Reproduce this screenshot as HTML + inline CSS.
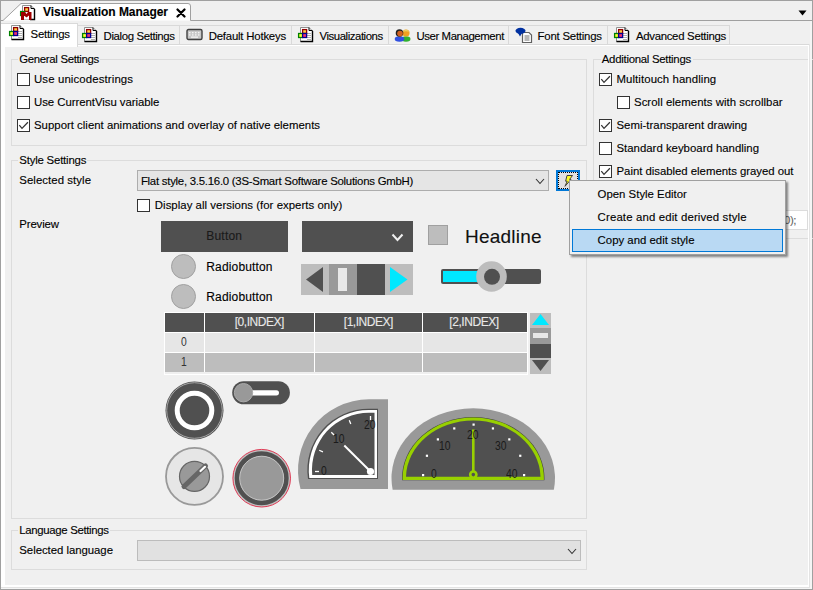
<!DOCTYPE html>
<html><head><meta charset="utf-8"><style>
html,body{margin:0;padding:0;width:813px;height:590px;overflow:hidden;background:#f0f0f0;font-family:"Liberation Sans",sans-serif;-webkit-text-stroke:0.12px currentColor;}
div,svg{box-sizing:content-box}
</style></head><body>
<div style="position:absolute;left:0px;top:0px;width:813px;height:590px;background:#f0f0f0"></div>
<svg style="position:absolute;left:0;top:0" width="813" height="26"><path d="M1 20.5 H3 L21 3.5 H188 Q190.5 3.5 190.5 6 V20.5 H812" fill="#fff" stroke="#a0a0a0" stroke-width="1"/><rect x="1" y="21" width="811" height="3" fill="#f0f0f0"/></svg>
<svg style="position:absolute;left:176px;top:8px" width="10" height="10"><path d="M1.5 1.5 L8.5 8.5 M8.5 1.5 L1.5 8.5" stroke="#000" stroke-width="2.2" stroke-linecap="round"/></svg>
<svg style="position:absolute;left:798px;top:10px" width="10" height="7"><path d="M0.5 0.5 H8.5 L4.5 5.5 Z" fill="#000"/></svg>
<svg style="position:absolute;left:19px;top:4px" width="17" height="17" viewBox="0 0 17 17">
<path d="M3.5 1.5 H12 L15.5 5 V15.5 H3.5 Z" fill="#fff" stroke="#909090"/>
<path d="M15.5 5 V15.5 H11" fill="none" stroke="#000" stroke-width="1.4"/>
<path d="M12 1.5 V4.5 H15.5" fill="none" stroke="#000" stroke-width="1"/>
<rect x="5.6" y="3.6" width="4" height="3.8" fill="#ffd040" stroke="#900000" stroke-width="1.3"/>
<rect x="1.6" y="7.5" width="4" height="4" fill="#30a030" stroke="#008000" stroke-width="1.3"/>
<path d="M2 16 V8 H6 L7.5 10 L9 8 H12.5 V16 H10 V11.5 L7.5 13.5 L5 11.5 V16 Z" fill="#a00000"/>
<path d="M5 12 L7.5 14 L10 12 V15.5 H5 Z" fill="#fff"/>
</svg>
<div style="position:absolute;left:0px;top:0px;width:813px;height:1px;background:#a0a0a0"></div>
<div style="position:absolute;left:0px;top:0px;width:1px;height:590px;background:#a0a0a0"></div>
<div style="position:absolute;left:812px;top:0px;width:1px;height:590px;background:#a0a0a0"></div>
<div style="position:absolute;left:0px;top:589px;width:813px;height:1px;background:#a0a0a0"></div>
<div style="position:absolute;left:1px;top:44px;width:808px;height:543px;background:#fff"></div>
<div style="position:absolute;left:809px;top:44px;width:1px;height:544px;background:#e3e3e3"></div>
<div style="position:absolute;left:1px;top:587px;width:809px;height:1px;background:#e3e3e3"></div>
<div style="position:absolute;left:810px;top:21px;width:2px;height:568px;background:#f5f5f5"></div>
<div style="position:absolute;left:1px;top:588px;width:811px;height:1px;background:#f5f5f5"></div>
<div style="position:absolute;left:1px;top:21px;width:809px;height:23px;background:#f0f0f0"></div>
<div style="position:absolute;left:5px;top:46px;width:803px;height:539px;background:#f0f0f0"></div>
<div style="position:absolute;left:77px;top:25px;width:102px;height:18px;border:1px solid #d9d9d9;border-left:none;background:#f0f0f0"></div>
<div style="position:absolute;left:180px;top:25px;width:111px;height:18px;border:1px solid #d9d9d9;border-left:none;background:#f0f0f0"></div>
<div style="position:absolute;left:292px;top:25px;width:96px;height:18px;border:1px solid #d9d9d9;border-left:none;background:#f0f0f0"></div>
<div style="position:absolute;left:389px;top:25px;width:119px;height:18px;border:1px solid #d9d9d9;border-left:none;background:#f0f0f0"></div>
<div style="position:absolute;left:509px;top:25px;width:98px;height:18px;border:1px solid #d9d9d9;border-left:none;background:#f0f0f0"></div>
<div style="position:absolute;left:608px;top:25px;width:121px;height:18px;border:1px solid #d9d9d9;border-left:none;background:#f0f0f0"></div>
<div style="position:absolute;left:77px;top:44px;width:733px;height:1px;background:#d9d9d9"></div>
<div style="position:absolute;left:1px;top:23px;width:76px;height:23px;border:1px solid #d9d9d9;border-bottom:none;border-left:none;background:#fff"></div>
<svg style="position:absolute;left:8px;top:24px" width="17" height="17" viewBox="0 0 17 17">
<path d="M3.5 1.5 H12 L15.5 5 V15.5 H3.5 Z" fill="#fff" stroke="#909090"/>
<path d="M15.5 5 V15.5 H3.5" fill="none" stroke="#000" stroke-width="1.4"/>
<path d="M12 1.5 V4.5 H15.5" fill="none" stroke="#000" stroke-width="1"/>
<g stroke="#b0b0b0"><path d="M10 7.5h4M10 9.5h4M10 11.5h4M10 13.5h4"/></g>
<rect x="5.6" y="3.6" width="4" height="3.8" fill="#ffd040" stroke="#900000" stroke-width="1.3"/>
<rect x="1.6" y="7.5" width="4" height="4" fill="#ffff30" stroke="#008000" stroke-width="1.3"/>
<rect x="5.6" y="7.5" width="4" height="4" fill="#f03070" stroke="#000090" stroke-width="1.3"/>
</svg>
<svg style="position:absolute;left:81px;top:26px" width="17" height="17" viewBox="0 0 17 17">
<path d="M3.5 1.5 H12 L15.5 5 V15.5 H3.5 Z" fill="#fff" stroke="#909090"/>
<path d="M15.5 5 V15.5 H3.5" fill="none" stroke="#000" stroke-width="1.4"/>
<path d="M12 1.5 V4.5 H15.5" fill="none" stroke="#000" stroke-width="1"/>
<g stroke="#b0b0b0"><path d="M10 7.5h4M10 9.5h4M10 11.5h4M10 13.5h4"/></g>
<rect x="5.6" y="3.6" width="4" height="3.8" fill="#ffd040" stroke="#900000" stroke-width="1.3"/>
<rect x="1.6" y="7.5" width="4" height="4" fill="#ffff30" stroke="#008000" stroke-width="1.3"/>
<rect x="5.6" y="7.5" width="4" height="4" fill="#f03070" stroke="#000090" stroke-width="1.3"/>
</svg>
<svg style="position:absolute;left:186px;top:28px" width="17" height="13" viewBox="0 0 17 13">
<rect x="1" y="1.5" width="15" height="10" rx="1.5" fill="#c8c8c8" stroke="#404040" stroke-width="1.4"/>
<g fill="#f4f4f4"><rect x="3" y="4" width="1.5" height="1.3"/><rect x="6" y="4" width="1.5" height="1.3"/><rect x="9" y="4" width="1.5" height="1.3"/><rect x="12" y="4" width="1.5" height="1.3"/>
<rect x="3" y="6.3" width="1.5" height="1.3"/><rect x="6" y="6.3" width="1.5" height="1.3"/><rect x="9" y="6.3" width="1.5" height="1.3"/><rect x="12" y="6.3" width="1.5" height="1.3"/><rect x="5" y="8.5" width="7" height="1.3"/></g>
</svg>
<svg style="position:absolute;left:297px;top:26px" width="17" height="17" viewBox="0 0 17 17">
<path d="M3.5 1.5 H12 L15.5 5 V15.5 H3.5 Z" fill="#fff" stroke="#909090"/>
<path d="M15.5 5 V15.5 H3.5" fill="none" stroke="#000" stroke-width="1.4"/>
<path d="M12 1.5 V4.5 H15.5" fill="none" stroke="#000" stroke-width="1"/>
<g stroke="#b0b0b0"><path d="M10 7.5h4M10 9.5h4M10 11.5h4M10 13.5h4"/></g>
<rect x="5.6" y="3.6" width="4" height="3.8" fill="#ffd040" stroke="#900000" stroke-width="1.3"/>
<rect x="1.6" y="7.5" width="4" height="4" fill="#ffff30" stroke="#008000" stroke-width="1.3"/>
<rect x="5.6" y="7.5" width="4" height="4" fill="#f03070" stroke="#000090" stroke-width="1.3"/>
</svg>
<svg style="position:absolute;left:394px;top:27px" width="17" height="15" viewBox="0 0 17 15">
<ellipse cx="12" cy="12" rx="4.5" ry="2.8" fill="#30b030"/>
<circle cx="12" cy="6" r="3.6" fill="#f0a020"/><path d="M8.5 5 Q12 0.5 15.5 5 Q12 3.5 8.5 5" fill="#e8d060"/>
<ellipse cx="5.5" cy="12" rx="4.8" ry="2.8" fill="#3050e0"/>
<circle cx="5.5" cy="6" r="3.8" fill="#202020"/><circle cx="6" cy="6.6" r="2.8" fill="#d06020"/>
</svg>
<svg style="position:absolute;left:515px;top:27px" width="18" height="17" viewBox="0 0 18 17">
<path d="M7.5 5.5 H14 L16.5 8 V15.5 H7.5 Z" fill="#fff" stroke="#606060" stroke-width="1.2"/>
<g stroke="#707070"><path d="M9.5 9h5M9.5 11h5M9.5 13h5"/></g>
<ellipse cx="5.5" cy="3.8" rx="5" ry="3" fill="#0030a0"/><path d="M3 6 L5 9.5 L7 6 Z" fill="#0030a0"/>
</svg>
<svg style="position:absolute;left:613px;top:26px" width="17" height="17" viewBox="0 0 17 17">
<path d="M3.5 1.5 H12 L15.5 5 V15.5 H3.5 Z" fill="#fff" stroke="#909090"/>
<path d="M15.5 5 V15.5 H3.5" fill="none" stroke="#000" stroke-width="1.4"/>
<path d="M12 1.5 V4.5 H15.5" fill="none" stroke="#000" stroke-width="1"/>
<g stroke="#b0b0b0"><path d="M10 7.5h4M10 9.5h4M10 11.5h4M10 13.5h4"/></g>
<rect x="5.6" y="3.6" width="4" height="3.8" fill="#ffd040" stroke="#900000" stroke-width="1.3"/>
<rect x="1.6" y="7.5" width="4" height="4" fill="#ffff30" stroke="#008000" stroke-width="1.3"/>
<rect x="5.6" y="7.5" width="4" height="4" fill="#f03070" stroke="#000090" stroke-width="1.3"/>
</svg>
<div style="position:absolute;left:11px;top:59px;width:574px;height:85px;border:1px solid #dcdcdc"></div>
<div style="position:absolute;left:18px;top:57px;width:82px;height:5px;background:#f0f0f0"></div>
<div style="position:absolute;left:17px;top:73px;width:11px;height:11px;border:1px solid #333;background:#fff"></div>
<div style="position:absolute;left:17px;top:96px;width:11px;height:11px;border:1px solid #333;background:#fff"></div>
<div style="position:absolute;left:17px;top:119px;width:11px;height:11px;border:1px solid #333;background:#fff"></div>
<svg style="position:absolute;left:17px;top:119px" width="13" height="13"><path d="M2.3 6.2 L5 9.4 L10.9 3.2" fill="none" stroke="#333" stroke-width="1.25"/></svg>
<div style="position:absolute;left:11px;top:160px;width:574px;height:357px;border:1px solid #dcdcdc"></div>
<div style="position:absolute;left:18px;top:158px;width:69px;height:5px;background:#f0f0f0"></div>
<div style="position:absolute;left:137px;top:170px;width:410px;height:19px;background:#e5e5e5;border:1px solid #adadad"></div>
<svg style="position:absolute;left:536px;top:178.5px;overflow:visible" width="8" height="4.5"><path d="M0 0 L4.0 4.5 L8 0" fill="none" stroke="#333" stroke-width="1.1"/></svg>
<div style="position:absolute;left:556px;top:170px;width:20px;height:17px;border:2px solid #0078d7;background:#e1e1e1"></div>
<div style="position:absolute;left:558px;top:172px;width:18px;height:15px;border:1px dotted #000"></div>
<svg style="position:absolute;left:560px;top:172px" width="16" height="17" viewBox="560 172 16 17"><path d="M567 175.5 H572.5 L569.6 179.4 H571 L565 186.3 L567.2 181.2 H565.6 Z" fill="#ffff20" stroke="#404040" stroke-width="1" stroke-linejoin="round"/></svg>
<div style="position:absolute;left:137px;top:199px;width:11px;height:11px;border:1px solid #333;background:#fff"></div>
<div style="position:absolute;left:11px;top:530px;width:574px;height:38px;border:1px solid #dcdcdc"></div>
<div style="position:absolute;left:18px;top:528px;width:92px;height:5px;background:#f0f0f0"></div>
<div style="position:absolute;left:137px;top:540px;width:442px;height:19px;background:#e1e1e1;border:1px solid #bcbcbc"></div>
<svg style="position:absolute;left:568px;top:548.5px;overflow:visible" width="8" height="4.5"><path d="M0 0 L4.0 4.5 L8 0" fill="none" stroke="#333" stroke-width="1.1"/></svg>
<div style="position:absolute;left:593px;top:59px;width:230px;height:178px;border:1px solid #dcdcdc"></div>
<div style="position:absolute;left:601px;top:57px;width:92px;height:5px;background:#f0f0f0"></div>
<div style="position:absolute;left:599px;top:73px;width:11px;height:11px;border:1px solid #333;background:#fff"></div>
<svg style="position:absolute;left:599px;top:73px" width="13" height="13"><path d="M2.3 6.2 L5 9.4 L10.9 3.2" fill="none" stroke="#333" stroke-width="1.25"/></svg>
<div style="position:absolute;left:617px;top:96px;width:11px;height:11px;border:1px solid #333;background:#fff"></div>
<div style="position:absolute;left:599px;top:119px;width:11px;height:11px;border:1px solid #333;background:#fff"></div>
<svg style="position:absolute;left:599px;top:119px" width="13" height="13"><path d="M2.3 6.2 L5 9.4 L10.9 3.2" fill="none" stroke="#333" stroke-width="1.25"/></svg>
<div style="position:absolute;left:599px;top:142px;width:11px;height:11px;border:1px solid #333;background:#fff"></div>
<div style="position:absolute;left:599px;top:165px;width:11px;height:11px;border:1px solid #333;background:#fff"></div>
<svg style="position:absolute;left:599px;top:165px" width="13" height="13"><path d="M2.3 6.2 L5 9.4 L10.9 3.2" fill="none" stroke="#333" stroke-width="1.25"/></svg>
<div style="position:absolute;left:700px;top:210px;width:106px;height:18px;background:#fff;border:1px solid #dcdcdc"></div>
<div style="position:absolute;left:784px;top:215px;font-size:11.4px;line-height:11.4px;color:#666;letter-spacing:-0.4px;white-space:pre">0);</div>
<div style="position:absolute;left:808px;top:46px;width:1px;height:539px;background:#fff"></div>
<div style="position:absolute;left:809px;top:44px;width:1px;height:544px;background:#e3e3e3"></div>
<div style="position:absolute;left:810px;top:21px;width:2px;height:568px;background:#f5f5f5"></div>
<div style="position:absolute;left:569px;top:180px;width:217px;height:75px;box-shadow:2px 2px 2px rgba(0,0,0,0.45)"></div>
<div style="position:absolute;left:569px;top:180px;width:215px;height:73px;border:1px solid #a0a0a0;background:#f0f0f0"></div>
<div style="position:absolute;left:572px;top:229px;width:209px;height:21px;border:1px solid #0078d7;background:#b9d9f3"></div>
<svg style="position:absolute;left:0;top:0" width="813" height="590"><rect x="161" y="221" width="127" height="31" fill="#505050"/><circle cx="183.5" cy="266.5" r="12" fill="#bdbdbd" stroke="#a0a0a0" stroke-width="1"/><circle cx="183.5" cy="296.5" r="12" fill="#bdbdbd" stroke="#a0a0a0" stroke-width="1"/><rect x="302" y="221" width="111" height="31" fill="#505050"/><path d="M392.5 234.5 L397.5 240 L402.5 234.5" fill="none" stroke="#f0f0f0" stroke-width="2"/><rect x="301" y="264" width="28" height="31" fill="#bdbdbd"/><rect x="329" y="264" width="28" height="31" fill="#999999"/><rect x="357" y="264" width="28" height="31" fill="#505050"/><rect x="385" y="264" width="28" height="31" fill="#bdbdbd"/><path d="M306 279.5 L323 267 V292 Z" fill="#505050"/><rect x="338" y="268" width="9" height="23" fill="#e8e8e8"/><path d="M390 267 L407.5 279.5 L390 292 Z" fill="#00e8ff"/><rect x="428.5" y="225.5" width="19" height="19" fill="#bdbdbd" stroke="#a0a0a0"/><rect x="441" y="269" width="100" height="15" rx="2" fill="#505050"/><rect x="443" y="271" width="40" height="11" fill="#00e8ff"/><circle cx="491.5" cy="276.5" r="15.3" fill="#bdbdbd"/><circle cx="492" cy="276.8" r="8" fill="#505050"/><rect x="164" y="312" width="364" height="63" fill="#ffffff"/><rect x="165" y="313" width="39" height="19" fill="#505050"/><rect x="165" y="333" width="39" height="19" fill="#e6e6e6"/><rect x="165" y="353" width="39" height="19" fill="#bdbdbd"/><rect x="205" y="313" width="109" height="19" fill="#505050"/><rect x="205" y="333" width="109" height="19" fill="#e6e6e6"/><rect x="205" y="353" width="109" height="19" fill="#bdbdbd"/><rect x="315" y="313" width="107" height="19" fill="#505050"/><rect x="315" y="333" width="107" height="19" fill="#e6e6e6"/><rect x="315" y="353" width="107" height="19" fill="#bdbdbd"/><rect x="423" y="313" width="104" height="19" fill="#505050"/><rect x="423" y="333" width="104" height="19" fill="#e6e6e6"/><rect x="423" y="353" width="104" height="19" fill="#bdbdbd"/><rect x="165" y="372.5" width="362" height="1" fill="#e0e0e0"/><rect x="530" y="313" width="21" height="15" fill="#bdbdbd"/><rect x="530" y="328" width="21" height="16" fill="#999999"/><rect x="530" y="344" width="21" height="14" fill="#505050"/><rect x="530" y="358" width="21" height="16" fill="#bdbdbd"/><path d="M532 325 L540.5 314 L549 325 Z" fill="#00e8ff"/><rect x="533" y="333" width="15" height="5" fill="#e8e8e8"/><path d="M532 360 L549 360 L540.5 371 Z" fill="#505050"/><circle cx="194.5" cy="410.5" r="29" fill="#505050"/><circle cx="194.5" cy="410.5" r="27.8" fill="none" stroke="#b0b0b0" stroke-width="0.9"/><circle cx="194.5" cy="410.5" r="17.3" fill="none" stroke="#ffffff" stroke-width="5"/><rect x="232.2" y="381.2" width="57.7" height="23.1" rx="11.5" fill="#505050"/><rect x="250" y="390.2" width="29" height="5.2" rx="2.6" fill="#ffffff"/><circle cx="243.5" cy="392.7" r="9.2" fill="#999999" stroke="#aaaaaa" stroke-width="1"/><circle cx="194.5" cy="476.4" r="28.5" fill="#e6e6e6" stroke="#999999" stroke-width="1.8"/><circle cx="194.5" cy="476.4" r="15" fill="#999999" stroke="#666666" stroke-width="1.2"/><path d="M184 486.5 L205.5 466" stroke="#666666" stroke-width="5" stroke-linecap="round"/><path d="M200.5 471 L205 466.8" stroke="#ffffff" stroke-width="2.2" stroke-linecap="round"/><circle cx="261.7" cy="478.2" r="28.8" fill="#c0c0c0" stroke="#e03a55" stroke-width="1"/><circle cx="261.7" cy="478.2" r="24.5" fill="none" stroke="#505050" stroke-width="5"/><circle cx="261.7" cy="478.2" r="22" fill="#999999" stroke="#c8c8c8" stroke-width="0.9"/><path d="M388 399.3 H369 A71 71 0 0 0 300.5 489 H388 Z" fill="#999999"/><path d="M378 408.7 H369 A61.3 61.3 0 0 0 308 479 H378 Z" fill="#505050"/><path d="M377 410 H369 A60 60 0 0 0 309.3 478 H377 Z" fill="#ffffff"/><path d="M374.5 412.8 H369 A57 57 0 0 0 312.2 475 H374.5 Z" fill="#505050"/><path d="M319.00 471.50 L315.00 471.50" stroke="#ffffff" stroke-width="1.3"/><path d="M322.92 451.79 L319.22 450.26" stroke="#ffffff" stroke-width="1.3"/><path d="M334.08 435.08 L331.26 432.26" stroke="#ffffff" stroke-width="1.3"/><path d="M350.79 423.92 L349.26 420.22" stroke="#ffffff" stroke-width="1.3"/><path d="M370.50 420.00 L370.50 416.00" stroke="#ffffff" stroke-width="1.3"/><path d="M370.5 471.5 L344.3 445.5" stroke="#ffffff" stroke-width="2"/><circle cx="370.5" cy="471.5" r="3.6" fill="#ffffff"/><path d="M392.66 489.7 A81.75 69.7 0 1 1 553.84 489.7 Z" fill="#999999"/><path d="M402.10 480.3 A71.2 61 0 1 1 544.40 480.3 Z" fill="#404040"/><path d="M402.64 480 A70.65 60.4 0 1 1 543.86 480 Z" fill="#98d000"/><path d="M406.01 476.8 A67.25 57.2 0 0 1 540.49 476.8 Z" fill="#505050"/><rect x="422.00" y="474.00" width="2.2" height="2.2" fill="#ffffff"/><rect x="425.84" y="454.67" width="2.2" height="2.2" fill="#ffffff"/><rect x="436.79" y="438.29" width="2.2" height="2.2" fill="#ffffff"/><rect x="453.17" y="427.34" width="2.2" height="2.2" fill="#ffffff"/><rect x="472.50" y="423.50" width="2.2" height="2.2" fill="#ffffff"/><rect x="491.83" y="427.34" width="2.2" height="2.2" fill="#ffffff"/><rect x="508.21" y="438.29" width="2.2" height="2.2" fill="#ffffff"/><rect x="519.16" y="454.67" width="2.2" height="2.2" fill="#ffffff"/><rect x="523.00" y="474.00" width="2.2" height="2.2" fill="#ffffff"/><rect x="472" y="429.5" width="2.6" height="42" fill="#98d000"/><circle cx="473.3" cy="474.6" r="3.1" fill="#505050" stroke="#98d000" stroke-width="2.6"/></svg>
<div style="position:absolute;left:43.00px;top:6.00px;font-size:12px;line-height:12px;font-weight:bold;color:#000;letter-spacing:-0.041px;white-space:pre;">Visualization Manager</div>
<div style="position:absolute;left:30.60px;top:29.00px;font-size:11.4px;line-height:11.4px;font-weight:normal;color:#000;letter-spacing:-0.253px;white-space:pre;">Settings</div>
<div style="position:absolute;left:103.60px;top:31.00px;font-size:11.4px;line-height:11.4px;font-weight:normal;color:#000;letter-spacing:-0.373px;white-space:pre;">Dialog Settings</div>
<div style="position:absolute;left:208.70px;top:31.00px;font-size:11.4px;line-height:11.4px;font-weight:normal;color:#000;letter-spacing:-0.208px;white-space:pre;">Default Hotkeys</div>
<div style="position:absolute;left:319.50px;top:31.00px;font-size:11.4px;line-height:11.4px;font-weight:normal;color:#000;letter-spacing:-0.443px;white-space:pre;">Visualizations</div>
<div style="position:absolute;left:416.40px;top:31.00px;font-size:11.4px;line-height:11.4px;font-weight:normal;color:#000;letter-spacing:-0.407px;white-space:pre;">User Management</div>
<div style="position:absolute;left:537.60px;top:31.00px;font-size:11.4px;line-height:11.4px;font-weight:normal;color:#000;letter-spacing:-0.227px;white-space:pre;">Font Settings</div>
<div style="position:absolute;left:635.90px;top:31.00px;font-size:11.4px;line-height:11.4px;font-weight:normal;color:#000;letter-spacing:-0.294px;white-space:pre;">Advanced Settings</div>
<div style="position:absolute;left:19.30px;top:54.00px;font-size:11.4px;line-height:11.4px;font-weight:normal;color:#000;letter-spacing:-0.324px;white-space:pre;">General Settings</div>
<div style="position:absolute;left:34.00px;top:74.00px;font-size:11.4px;line-height:11.4px;font-weight:normal;color:#000;letter-spacing:0.125px;white-space:pre;">Use unicodestrings</div>
<div style="position:absolute;left:34.00px;top:97.00px;font-size:11.4px;line-height:11.4px;font-weight:normal;color:#000;letter-spacing:-0.044px;white-space:pre;">Use CurrentVisu variable</div>
<div style="position:absolute;left:34.00px;top:120.00px;font-size:11.4px;line-height:11.4px;font-weight:normal;color:#000;letter-spacing:0.008px;white-space:pre;">Support client animations and overlay of native elements</div>
<div style="position:absolute;left:19.30px;top:155.00px;font-size:11.4px;line-height:11.4px;font-weight:normal;color:#000;letter-spacing:-0.197px;white-space:pre;">Style Settings</div>
<div style="position:absolute;left:19.30px;top:175.00px;font-size:11.4px;line-height:11.4px;font-weight:normal;color:#000;letter-spacing:0.060px;white-space:pre;">Selected style</div>
<div style="position:absolute;left:140.90px;top:176.00px;font-size:11.4px;line-height:11.4px;font-weight:normal;color:#000;letter-spacing:-0.254px;white-space:pre;">Flat style, 3.5.16.0 (3S-Smart Software Solutions GmbH)</div>
<div style="position:absolute;left:154.80px;top:200.00px;font-size:11.4px;line-height:11.4px;font-weight:normal;color:#000;letter-spacing:0.036px;white-space:pre;">Display all versions (for experts only)</div>
<div style="position:absolute;left:19.30px;top:219.00px;font-size:11.4px;line-height:11.4px;font-weight:normal;color:#000;letter-spacing:-0.136px;white-space:pre;">Preview</div>
<div style="position:absolute;left:19.30px;top:525.00px;font-size:11.4px;line-height:11.4px;font-weight:normal;color:#000;letter-spacing:-0.332px;white-space:pre;">Language Settings</div>
<div style="position:absolute;left:19.30px;top:545.00px;font-size:11.4px;line-height:11.4px;font-weight:normal;color:#000;letter-spacing:-0.042px;white-space:pre;">Selected language</div>
<div style="position:absolute;left:601.80px;top:54.00px;font-size:11.4px;line-height:11.4px;font-weight:normal;color:#000;letter-spacing:-0.276px;white-space:pre;">Additional Settings</div>
<div style="position:absolute;left:616.50px;top:74.00px;font-size:11.4px;line-height:11.4px;font-weight:normal;color:#000;letter-spacing:0.086px;white-space:pre;">Multitouch handling</div>
<div style="position:absolute;left:634.00px;top:97.00px;font-size:11.4px;line-height:11.4px;font-weight:normal;color:#000;letter-spacing:0.038px;white-space:pre;">Scroll elements with scrollbar</div>
<div style="position:absolute;left:616.50px;top:120.00px;font-size:11.4px;line-height:11.4px;font-weight:normal;color:#000;letter-spacing:0.012px;white-space:pre;">Semi-transparent drawing</div>
<div style="position:absolute;left:616.50px;top:143.00px;font-size:11.4px;line-height:11.4px;font-weight:normal;color:#000;letter-spacing:0.000px;white-space:pre;">Standard keyboard handling</div>
<div style="position:absolute;left:616.50px;top:166.00px;font-size:11.4px;line-height:11.4px;font-weight:normal;color:#000;letter-spacing:-0.028px;white-space:pre;">Paint disabled elements grayed out</div>
<div style="position:absolute;left:597.60px;top:189.00px;font-size:11.4px;line-height:11.4px;font-weight:normal;color:#000;letter-spacing:0.000px;white-space:pre;">Open Style Editor</div>
<div style="position:absolute;left:597.60px;top:212.00px;font-size:11.4px;line-height:11.4px;font-weight:normal;color:#000;letter-spacing:0.143px;white-space:pre;">Create and edit derived style</div>
<div style="position:absolute;left:597.60px;top:235.00px;font-size:11.4px;line-height:11.4px;font-weight:normal;color:#000;letter-spacing:0.000px;white-space:pre;">Copy and edit style</div>
<div style="position:absolute;left:206.30px;top:230.00px;font-size:12px;line-height:12px;font-weight:normal;color:#1a1a1a;letter-spacing:0.199px;white-space:pre;">Button</div>
<div style="position:absolute;left:206.30px;top:261.00px;font-size:12px;line-height:12px;font-weight:normal;color:#000;letter-spacing:0.148px;white-space:pre;">Radiobutton</div>
<div style="position:absolute;left:206.30px;top:291.00px;font-size:12px;line-height:12px;font-weight:normal;color:#000;letter-spacing:0.148px;white-space:pre;">Radiobutton</div>
<div style="position:absolute;left:465.10px;top:227.00px;font-size:19px;line-height:19px;font-weight:normal;color:#111;letter-spacing:0.200px;white-space:pre;">Headline</div>
<div style="position:absolute;left:234.70px;top:315.50px;font-size:12px;line-height:12px;font-weight:normal;color:#e8e8e8;letter-spacing:-0.457px;white-space:pre;">[0,INDEX]</div>
<div style="position:absolute;left:343.80px;top:315.50px;font-size:12px;line-height:12px;font-weight:normal;color:#e8e8e8;letter-spacing:-0.470px;white-space:pre;">[1,INDEX]</div>
<div style="position:absolute;left:449.30px;top:315.50px;font-size:12px;line-height:12px;font-weight:normal;color:#e8e8e8;letter-spacing:-0.432px;white-space:pre;">[2,INDEX]</div>
<div style="position:absolute;left:181.00px;top:336.00px;font-size:12px;line-height:12px;font-weight:normal;color:#333;letter-spacing:0.000px;white-space:pre;-webkit-text-stroke:0;transform:scaleX(0.86);transform-origin:0 0;">0</div>
<div style="position:absolute;left:181.00px;top:356.00px;font-size:12px;line-height:12px;font-weight:normal;color:#333;letter-spacing:0.000px;white-space:pre;-webkit-text-stroke:0;transform:scaleX(0.86);transform-origin:0 0;">1</div>
<div style="position:absolute;left:321.20px;top:464.50px;font-size:12px;line-height:12px;font-weight:normal;color:#1a1a1a;letter-spacing:0.000px;white-space:pre;-webkit-text-stroke:0;transform:scaleX(0.86);transform-origin:0 0;">0</div>
<div style="position:absolute;left:333.20px;top:433.00px;font-size:12px;line-height:12px;font-weight:normal;color:#1a1a1a;letter-spacing:0.000px;white-space:pre;-webkit-text-stroke:0;transform:scaleX(0.86);transform-origin:0 0;">10</div>
<div style="position:absolute;left:364.20px;top:418.80px;font-size:12px;line-height:12px;font-weight:normal;color:#1a1a1a;letter-spacing:0.000px;white-space:pre;-webkit-text-stroke:0;transform:scaleX(0.86);transform-origin:0 0;">20</div>
<div style="position:absolute;left:430.80px;top:468.00px;font-size:12px;line-height:12px;font-weight:normal;color:#1a1a1a;letter-spacing:0.000px;white-space:pre;-webkit-text-stroke:0;transform:scaleX(0.86);transform-origin:0 0;">0</div>
<div style="position:absolute;left:439.40px;top:440.00px;font-size:12px;line-height:12px;font-weight:normal;color:#1a1a1a;letter-spacing:0.000px;white-space:pre;-webkit-text-stroke:0;transform:scaleX(0.86);transform-origin:0 0;">10</div>
<div style="position:absolute;left:467.40px;top:429.10px;font-size:12px;line-height:12px;font-weight:normal;color:#1a1a1a;letter-spacing:0.000px;white-space:pre;-webkit-text-stroke:0;transform:scaleX(0.86);transform-origin:0 0;">20</div>
<div style="position:absolute;left:494.70px;top:440.00px;font-size:12px;line-height:12px;font-weight:normal;color:#1a1a1a;letter-spacing:0.000px;white-space:pre;-webkit-text-stroke:0;transform:scaleX(0.86);transform-origin:0 0;">30</div>
<div style="position:absolute;left:505.50px;top:468.00px;font-size:12px;line-height:12px;font-weight:normal;color:#1a1a1a;letter-spacing:0.000px;white-space:pre;-webkit-text-stroke:0;transform:scaleX(0.86);transform-origin:0 0;">40</div>
</body></html>
